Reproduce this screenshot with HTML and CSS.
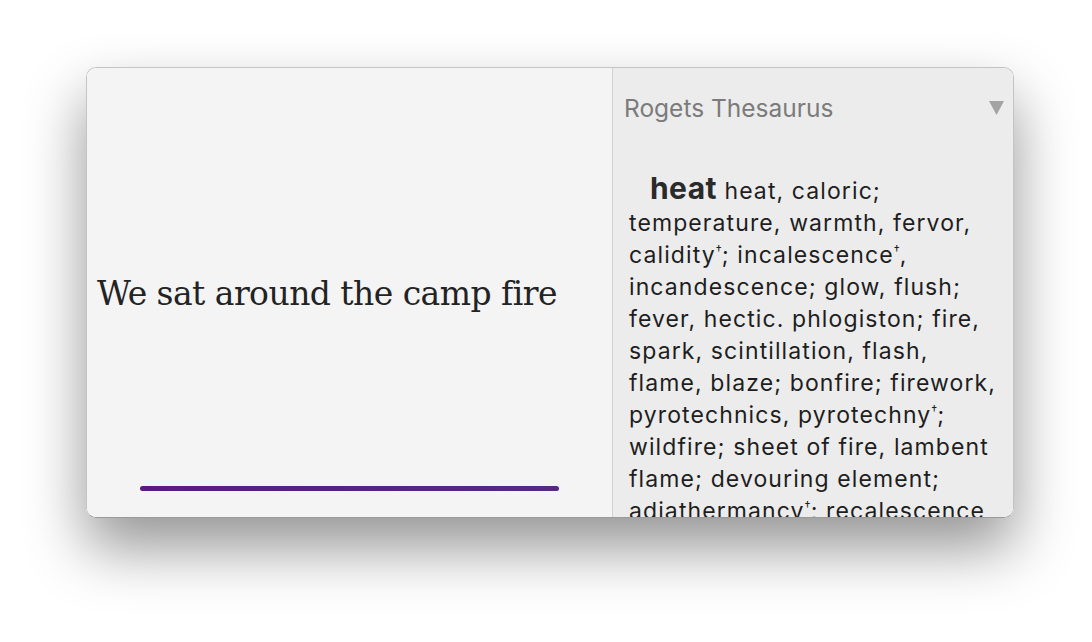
FILE: index.html
```html
<!DOCTYPE html>
<html lang="en">
<head>
    <meta charset="UTF-8">
    <meta name="viewport" content="width=device-width, initial-scale=1.0">
    <title>Thesaurus</title>
    <link rel="stylesheet" href="styles.css">
</head>
<body>

<div class="window">
    <div class="editor">
        <div class="sentence">We sat around the camp fire</div>
        <div class="underline"></div>
    </div>
    <div class="sidebar">
        <div class="source">
            <span>Rogets Thesaurus</span>
            <svg class="arrow" width="15" height="14" viewBox="0 0 15 14">
                <path d="M0 0 H15 L7.5 14 Z" fill="#a3a3a3"/>
            </svg>
        </div>
        <div class="entry">
            <b>heat</b> heat, caloric; temperature, warmth, fervor, calidity<sup>&dagger;</sup>; incalescence<sup>&dagger;</sup>, incandescence; glow, flush; fever, hectic. phlogiston; fire, spark, scintillation, flash, flame, blaze; bonfire; firework, pyrotechnics, pyrotechny<sup>&dagger;</sup>; wildfire; sheet of fire, lambent flame; devouring element; adiathermancy<sup>&dagger;</sup>; recalescence
        </div>
    </div>
</div>

</body>
</html>
```

FILE: styles.css
```css
body {
    margin: 0;
    padding: 67px 0 0 86px;
    background-color: white;
    height: 642px;
    box-sizing: border-box;
    overflow: hidden;
}

.window {
    width: 928px;
    height: 451px;
    box-sizing: border-box;
    display: flex;
    border: 1px solid #c4c4c4;
    border-bottom-color: #9a9a9a;
    border-radius: 10px;
    overflow: hidden;
    box-shadow: 0 30px 60px rgba(0, 0, 0, 0.42);
}

.editor {
    width: 526px;
    background-color: #f4f4f4;
    border-right: 1px solid #d2d2d2;
    display: flex;
    flex-direction: column;
    align-items: center;
    padding: 32px 0 26px;
    box-sizing: border-box;
}

.sentence {
    flex: 1;
    align-self: stretch;
    display: flex;
    align-items: center;
    padding-left: 10px;
    font-family: "DejaVu Serif", serif;
    font-size: 33px;
    color: #232323;
    letter-spacing: -0.55px;
}

.underline {
    width: 419px;
    height: 5px;
    border-radius: 3px;
    background: linear-gradient(to right, #5d1a7d, #552a80);
}

.sidebar {
    flex: 1;
    background-color: #ececec;
    padding: 25px 13px 0 11px;
    overflow: hidden;
    font-family: Inter, "Liberation Sans", sans-serif;
}

.source {
    display: flex;
    justify-content: space-between;
    align-items: center;
    margin-right: -4px;
    font-size: 24.5px;
    line-height: 30px;
    color: #7b7b7b;
}

.entry {
    margin-top: 52px;
    padding-left: 5px;
    text-indent: 21px;
    font-size: 23px;
    line-height: 32px;
    letter-spacing: 1.1px;
    color: #1e1e1e;
}

.entry::first-line {
    line-height: 26px;
}

.entry b {
    font-size: 30px;
    letter-spacing: 0.4px;
    color: #2a2a2a;
}

.entry sup {
    font-size: 12px;
    line-height: 0;
    letter-spacing: 0;
    vertical-align: 9px;
}
```
